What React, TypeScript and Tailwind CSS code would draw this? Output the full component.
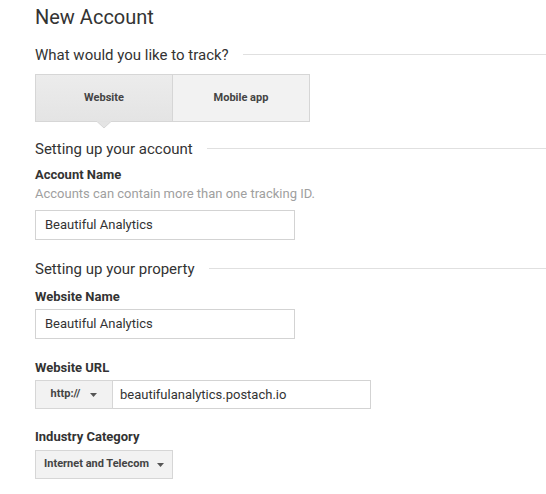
import React from 'react';

const SectionHeading: React.FC<{ title: string; className?: string }> = ({ title, className }) => (
  <div className={`flex items-center ${className ?? ''}`}>
    <span className="text-[15px] leading-[20px] text-[#333] whitespace-nowrap">{title}</span>
    <div className="ml-[14px] h-px flex-1 bg-[#e0e0e0] mt-[-1px]" />
  </div>
);

const Caret: React.FC<{ gap: string }> = ({ gap }) => (
  <svg width="7" height="4" viewBox="0 0 7 4" className={gap}>
    <path d="M0 0 L7 0 L3.5 4 Z" fill="#555" />
  </svg>
);

const App: React.FC = () => {
  return (
    <div className="w-[546px] h-[494px] bg-white overflow-hidden pl-[35px] font-['Roboto',sans-serif] text-[#333]">
      <h1 className="mt-[3px] text-[20px] leading-[28px] text-[#333]">New Account</h1>

      <SectionHeading title="What would you like to track?" className="mt-[14px]" />

      <div className="relative mt-[9px] flex w-[275px] h-[48px]">
        <button className="flex-1 flex items-center justify-center border border-[#d6d6d6] bg-gradient-to-b from-[#ececec] to-[#e4e4e4] text-[11px] font-bold text-[#444]">
          Website
        </button>
        <button className="flex-1 flex items-center justify-center border border-l-0 border-[#d6d6d6] bg-[#f2f2f2] text-[11px] font-bold text-[#444]">
          Mobile app
        </button>
        <svg width="14" height="8" viewBox="0 0 14 8" className="absolute left-[62px] top-[47px]">
          <path d="M0 0.5 L7 7 L14 0.5" fill="#e4e4e4" stroke="#d6d6d6" />
          <rect x="0" y="0" width="14" height="0.8" fill="#e4e4e4" />
        </svg>
      </div>

      <SectionHeading title="Setting up your account" className="mt-[17px]" />

      <div className="mt-[8px] text-[13px] leading-[16px] font-bold text-[#333]">Account Name</div>
      <div className="mt-[3px] text-[13px] leading-[16px] text-[#a0a0a0]">Accounts can contain more than one tracking ID.</div>
      <div className="mt-[8px] w-[260px] h-[30px] border border-[#d3d3d3] flex items-center px-[9px] text-[13px] text-[#333]">
        Beautiful Analytics
      </div>

      <SectionHeading title="Setting up your property" className="mt-[19px]" />

      <div className="mt-[10px] text-[13px] leading-[16px] font-bold text-[#333]">Website Name</div>
      <div className="mt-[4px] w-[260px] h-[30px] border border-[#d3d3d3] flex items-center px-[9px] text-[13px] text-[#333]">
        Beautiful Analytics
      </div>

      <div className="mt-[21px] text-[13px] leading-[16px] font-bold text-[#333]">Website URL</div>
      <div className="mt-[4px] flex w-[336px] h-[29px]">
        <div className="w-[78px] flex items-center justify-center border border-[#d6d6d6] bg-[#f2f2f2] text-[11px] font-bold text-[#444]">
          http://
          <Caret gap="ml-[10px]" />
        </div>
        <div className="flex-1 flex items-center border border-l-0 border-[#d3d3d3] px-[7px] text-[13px] text-[#333]">
          beautifulanalytics.postach.io
        </div>
      </div>

      <div className="mt-[20px] text-[13px] leading-[16px] font-bold text-[#333]">Industry Category</div>
      <div className="mt-[5px] w-[138px] h-[29px] flex items-center justify-center border border-[#d6d6d6] bg-[#f2f2f2] text-[11px] font-bold text-[#444]">
        Internet and Telecom
        <Caret gap="ml-[8px]" />
      </div>
    </div>
  );
};

export default App;
